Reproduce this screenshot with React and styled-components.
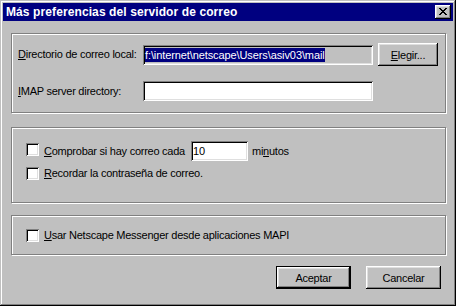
import React from 'react';
import styled, { createGlobalStyle, css } from 'styled-components';

const Global = createGlobalStyle`
  html, body { margin: 0; padding: 0; background: #c0c0c0; }
  body { font-family: "Liberation Sans", Arial, sans-serif; font-size: 11px; color: #000; letter-spacing: -0.25px; }
  * { box-sizing: border-box; }
`;

const Window = styled.div`
  width: 456px;
  height: 306px;
  background: #c0c0c0;
  padding: 3px;
  display: flex;
  flex-direction: column;
  box-shadow: inset -1px -1px #000, inset 1px 1px #c0c0c0, inset -2px -2px #808080, inset 2px 2px #fff;
`;

const TitleBar = styled.div`
  height: 18px;
  background: #000080;
  display: flex;
  align-items: center;
  padding: 0 2px 0 3px;
`;

const TitleText = styled.span`
  flex: 1;
  color: #fff;
  font-weight: bold;
  font-size: 12px;
  letter-spacing: 0.1px;
  white-space: nowrap;
`;

const bevel = css`
  background: #c0c0c0;
  box-shadow: inset -1px -1px #000, inset 1px 1px #fff, inset -2px -2px #808080, inset 2px 2px #dfdfdf;
`;

const CloseButton = styled.div`
  width: 16px;
  height: 14px;
  ${bevel};
  display: flex;
  align-items: center;
  justify-content: center;
  padding: 0 1px 1px 0;
`;

const Body = styled.div`
  flex: 1;
  display: flex;
  flex-direction: column;
  padding: 0 7px 0 8px;
`;

const Group = styled.div`
  height: ${p => p.$h}px;
  margin-top: ${p => p.$mt}px;
  border: 1px solid #808080;
  box-shadow: 1px 1px 0 #fff, inset 1px 1px 0 #fff;
  padding: ${p => p.$pad};
  display: flex;
  flex-direction: column;
`;

const FieldRow = styled.div`
  display: flex;
  align-items: flex-start;
  margin-top: ${p => p.$mt || 0}px;
`;

const FieldLabel = styled.div`
  width: 125px;
  line-height: ${p => p.$lh}px;
  white-space: nowrap;
`;

const U = styled.span`
  text-decoration: underline;
  text-underline-offset: 1px;
`;

const TextBox = styled.div`
  width: ${p => p.$w}px;
  height: 20px;
  flex: none;
  margin-top: ${p => p.$mt || 0}px;
  margin-left: ${p => p.$ml || 0}px;
  background: ${p => (p.$readonly ? '#c0c0c0' : '#fff')};
  box-shadow: inset 1px 1px #808080, inset -1px -1px #fff, inset 2px 2px #000, inset -2px -2px #dfdfdf;
  padding: 3px 2px 0 2px;
  line-height: 14px;
  letter-spacing: -0.1px;
  white-space: nowrap;
  overflow: hidden;
`;

const Selected = styled.span`
  background: #000080;
  color: #fff;
  display: inline-block;
  line-height: 14px;
`;

const Button = styled.div`
  width: ${p => p.$w}px;
  height: 23px;
  margin-left: ${p => p.$ml || 0}px;
  ${bevel};
  display: flex;
  align-items: center;
  justify-content: center;
  white-space: nowrap;
  ${p => p.$default && css`
    border: 1px solid #000;
  `}
`;

const CheckRow = styled.div`
  display: flex;
  align-items: ${p => p.$align || 'center'};
  height: ${p => p.$h || 13}px;
  margin-top: ${p => p.$mt || 0}px;
`;

const CheckBox = styled.div`
  width: 13px;
  height: 13px;
  flex: none;
  background: #fff;
  margin-top: ${p => p.$mt || 0}px;
  box-shadow: inset 1px 1px #808080, inset -1px -1px #fff, inset 2px 2px #000, inset -2px -2px #dfdfdf;
`;

const CheckLabel = styled.span`
  margin-left: ${p => p.$ml ?? 5}px;
  line-height: ${p => p.$lh || 13}px;
  white-space: nowrap;
`;

const Buttons = styled.div`
  display: flex;
  justify-content: flex-end;
  margin-top: 11px;
  padding-right: 5px;
  gap: 15px;
`;

function CloseGlyph() {
  const px = [
    [0, 0], [1, 0], [6, 0], [7, 0],
    [1, 1], [2, 1], [5, 1], [6, 1],
    [2, 2], [3, 2], [4, 2], [5, 2],
    [3, 3], [4, 3],
    [2, 4], [3, 4], [4, 4], [5, 4],
    [1, 5], [2, 5], [5, 5], [6, 5],
    [0, 6], [1, 6], [6, 6], [7, 6],
  ];
  return (
    <svg width="8" height="7" viewBox="0 0 8 7" shapeRendering="crispEdges">
      {px.map(([x, y]) => (
        <rect key={`${x}-${y}`} x={x} y={y} width="1" height="1" fill="#000" />
      ))}
    </svg>
  );
}

export default function App() {
  return (
    <>
      <Global />
      <Window>
        <TitleBar>
          <TitleText>Más preferencias del servidor de correo</TitleText>
          <CloseButton><CloseGlyph /></CloseButton>
        </TitleBar>
        <Body>
          <Group $h={80} $mt={12} $pad="9px 0 0 6px">
            <FieldRow>
              <FieldLabel $lh={23}><U>D</U>irectorio de correo local:</FieldLabel>
              <TextBox $w={230} $mt={2} $readonly>
                <Selected>f:\internet\netscape\Users\asiv03\mail</Selected>
              </TextBox>
              <Button $w={60} $ml={5}><span><U>E</U>legir...</span></Button>
            </FieldRow>
            <FieldRow $mt={15}>
              <FieldLabel $lh={20}><U>I</U>MAP server directory:</FieldLabel>
              <TextBox $w={230} />
            </FieldRow>
          </Group>
          <Group $h={76} $mt={14} $pad="13px 0 0 14px">
            <CheckRow $h={20} $align="flex-start">
              <CheckBox $mt={2} />
              <CheckLabel $lh={20}><U>C</U>omprobar si hay correo cada</CheckLabel>
              <TextBox $w={57} $ml={6}>10</TextBox>
              <CheckLabel $lh={20} $ml={4}>mi<U>n</U>utos</CheckLabel>
            </CheckRow>
            <CheckRow $mt={6}>
              <CheckBox />
              <CheckLabel><U>R</U>ecordar la contraseña de correo.</CheckLabel>
            </CheckRow>
          </Group>
          <Group $h={40} $mt={12} $pad="13px 0 0 14px">
            <CheckRow>
              <CheckBox />
              <CheckLabel><U>U</U>sar Netscape Messenger desde aplicaciones MAPI</CheckLabel>
            </CheckRow>
          </Group>
          <Buttons>
            <Button $w={75} $default>Aceptar</Button>
            <Button $w={75}>Cancelar</Button>
          </Buttons>
        </Body>
      </Window>
    </>
  );
}
